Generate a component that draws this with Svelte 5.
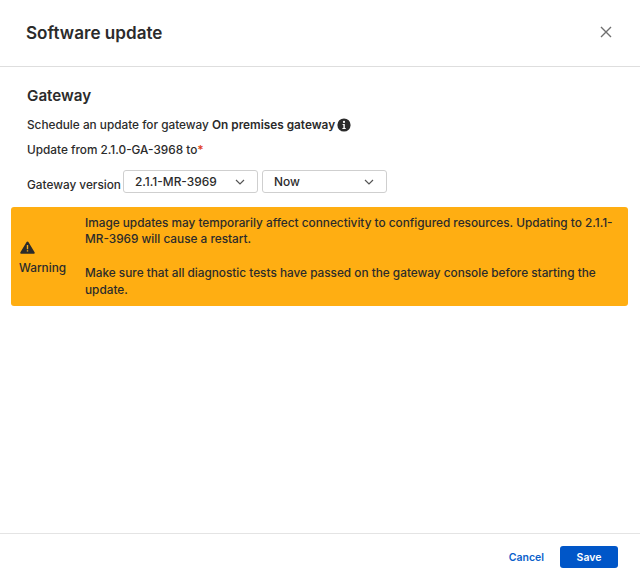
<script>
	let version = '2.1.1-MR-3969';
	let when = 'Now';
</script>

<div class="dialog">
	<header class="head">
		<h1>Software update</h1>
		<button class="close" aria-label="Close">
			<svg width="12" height="12" viewBox="0 0 12 12"><path d="M1 1l10 10M11 1L1 11" stroke="#6f6f6f" stroke-width="1.4" fill="none" /></svg>
		</button>
	</header>

	<main class="body">
		<div class="intro">
			<h2>Gateway</h2>
			<p class="line first">
				Schedule an update for gateway <b>On premises gateway</b>
				<svg class="info" width="14" height="14" viewBox="0 0 14 14">
					<circle cx="7" cy="7" r="6.6" fill="#2b2b2b" />
					<circle cx="7" cy="3.9" r="1.1" fill="#fff" />
					<path d="M5.6 6h2.2v3.9h.9v1.1H5.4V9.9h1V7.1h-.8z" fill="#fff" />
				</svg>
			</p>
			<p class="line second">Update from 2.1.0-GA-3968 to<span class="req">*</span></p>
			<div class="selects">
				<span class="label">Gateway version</span>
				<div class="select wide">
					<span>{version}</span>
					<svg width="10" height="6" viewBox="0 0 10 6"><path d="M1 1l4 4 4-4" stroke="#555" stroke-width="1.2" fill="none" /></svg>
				</div>
				<div class="select">
					<span>{when}</span>
					<svg width="10" height="6" viewBox="0 0 10 6"><path d="M1 1l4 4 4-4" stroke="#555" stroke-width="1.2" fill="none" /></svg>
				</div>
			</div>
		</div>

		<div class="warning">
			<div class="side">
				<svg width="15" height="13" viewBox="0 0 15 13">
					<path d="M7.5.4c.4 0 .7.2.9.5l6.2 10.300c.4.7-.1 1.600-.9 1.600H1.300c-.8 0-1.300-.9-.9-1.600L6.600.9c.2-.3.5-.5.900-.5z" fill="#2b2b2b" />
					<path d="M6.800 4h1.400v4.200H6.800zM6.800 9.200h1.400v1.400H6.800z" fill="#ffae12" />
				</svg>
				<span>Warning</span>
			</div>
			<div class="msg">
				<p>Image updates may temporarily affect connectivity to configured resources. Updating to 2.1.1-MR-3969 will cause a restart.</p>
				<p>Make sure that all diagnostic tests have passed on the gateway console before starting the update.</p>
			</div>
		</div>
	</main>

	<footer class="foot">
		<button class="cancel">Cancel</button>
		<button class="save">Save</button>
	</footer>
</div>

<style>
	:global(body) {
		background: #fff;
	}

	.dialog {
		height: 582px;
		display: flex;
		flex-direction: column;
		font-family: Inter, "Liberation Sans", sans-serif;
		color: #2b2b2b;
		font-size: 11.800px;
		font-weight: 450;
	}

	.head {
		height: 64px;
		border-bottom: 1px solid #dedede;
		display: flex;
		align-items: center;
		justify-content: space-between;
		padding: 0 28px 2px 26px;
	}

	h1 {
		margin: 0;
		font-size: 17.100px;
		font-weight: 600;
	}

	.close {
		border: 0;
		background: none;
		padding: 0;
		display: flex;
	}

	.body {
		flex: 1;
		padding: 0 12px 0 11px;
	}

	.intro {
		padding: 19px 0 0 16px;
	}

	h2 {
		margin: 0;
		font-size: 15.200px;
		font-weight: 600;
		line-height: 19px;
	}

	.line {
		margin: 0;
		line-height: 16px;
	}

	.first {
		margin-top: 12px;
		display: flex;
		align-items: center;
		white-space: pre-wrap;
	}

	.first b {
		font-weight: 600;
	}

	.info {
		margin-left: 2px;
	}

	.second {
		margin-top: 9px;
	}

	.req {
		color: #e0401c;
		font-weight: 600;
	}

	.selects {
		display: flex;
		align-items: center;
		margin-top: 12px;
	}

	.label {
		margin-right: 2px;
		padding-top: 6px;
	}

	.select {
		box-sizing: border-box;
		width: 125px;
		height: 23px;
		border: 1px solid #cfcfcf;
		border-radius: 3px;
		display: flex;
		align-items: center;
		justify-content: space-between;
		padding: 0 12px 0 11px;
		margin-right: 4px;
		font-size: 11.900px;
	}

	.select.wide {
		width: 135px;
	}

	.warning {
		margin-top: 14px;
		height: 99px;
		background: #ffae12;
		border-radius: 3px;
		display: flex;
		align-items: center;
	}

	.side {
		width: 74px;
		flex: none;
		display: flex;
		flex-direction: column;
		align-items: flex-start;
		gap: 7px;
		padding: 2px 0 0 8px;
		box-sizing: border-box;
	}

	.side svg {
		margin-left: 1px;
	}

	.msg p {
		margin: 0;
		line-height: 16.700px;
	}

	.msg p + p {
		margin-top: 16.700px;
	}

	.msg {
		padding-right: 6px;
	}

	.foot {
		height: 49px;
		border-top: 1px solid #e4e4e4;
		display: flex;
		align-items: center;
		justify-content: flex-end;
		padding: 0 22px 2px 0;
		box-sizing: border-box;
		gap: 16px;
	}

	.foot button {
		font-family: inherit;
		font-size: 10.500px;
		font-weight: 600;
		border: 0;
		padding: 0;
	}

	.cancel {
		background: none;
		color: #0a5fcb;
	}

	.save {
		width: 58px;
		height: 22px;
		background: #0056c8;
		color: #fff;
		border-radius: 3px;
	}
</style>
